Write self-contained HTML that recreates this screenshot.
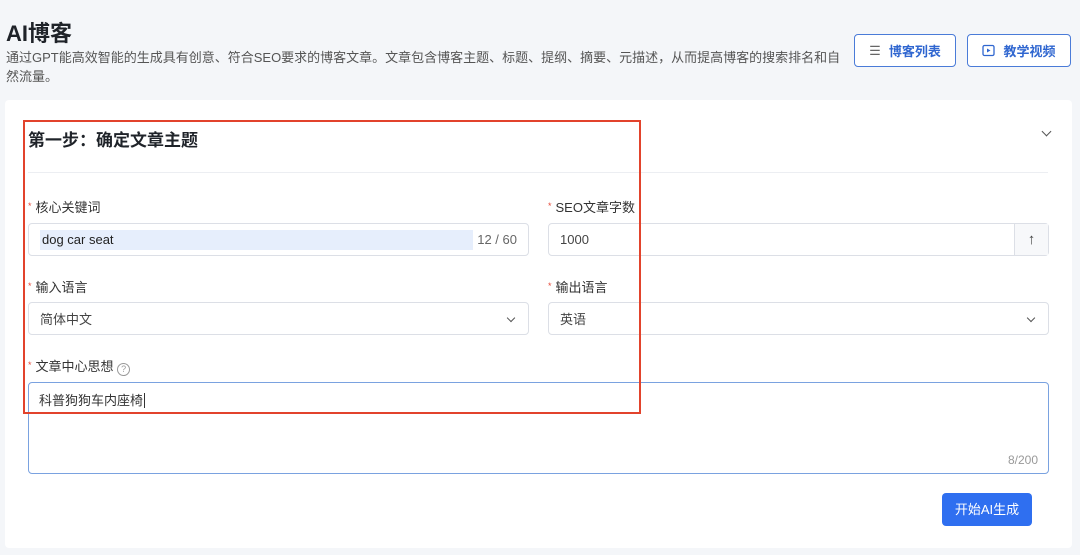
<!DOCTYPE html>
<html><head><meta charset="utf-8"><style>
*{box-sizing:border-box;margin:0;padding:0}
body{width:1080px;height:555px;background:#f4f6f9;font-family:"Liberation Sans","Noto Sans CJK SC",sans-serif;position:relative;overflow:hidden;color:#333}
.a{position:absolute}
h1{position:absolute;left:6px;top:16px;font-size:22px;font-weight:bold;color:#1f2329}
.desc{left:6px;top:48px;width:840px;font-size:13px;line-height:19px;color:#555}
.btn{position:absolute;top:34px;height:33px;border:1px solid #4a7bd8;border-radius:4px;background:#fff;color:#2f66d0;font-size:13px;font-weight:bold;display:flex;align-items:center;justify-content:center;gap:8px}
.card{left:5px;top:100px;width:1067px;height:448px;background:#fff;border-radius:4px}
.lbl{position:absolute;font-size:13px;color:#333}
.lbl:before{content:"*";color:#e64a3a;font-size:9px;margin-right:4px;position:relative;top:-3px}
.inp{position:absolute;height:33px;border:1px solid #dcdfe6;border-radius:4px;background:#fff;font-size:13px;display:flex;align-items:center;padding-left:11px}
.chev{position:absolute;right:14px;top:12px;width:6px;height:6px;border-right:1.2px solid #555;border-bottom:1.2px solid #555;transform:rotate(45deg)}
</style></head><body>
<h1>AI博客</h1>
<div class="a desc">通过GPT能高效智能的生成具有创意、符合SEO要求的博客文章。文章包含博客主题、标题、提纲、摘要、元描述，从而提高博客的搜索排名和自然流量。</div>
<div class="btn" style="left:854px;width:102px"><span style="font-weight:normal;color:#666">☰</span>博客列表</div>
<div class="btn" style="left:967px;width:104px"><svg width="13" height="13" viewBox="0 0 13 13"><rect x="1" y="1.5" width="11" height="10" rx="1.5" fill="none" stroke="#2f66d0" stroke-width="1.3"/><path d="M5 4.5l3.5 2-3.5 2z" fill="#2f66d0"/></svg>教学视频</div>
<div class="a card"></div>
<div class="a" style="left:28px;top:126px;font-size:17px;font-weight:bold;color:#1f2329">第一步：确定文章主题</div>
<div class="a" style="left:1043px;top:128px;width:7px;height:7px;border-right:1.2px solid #555;border-bottom:1.2px solid #555;transform:rotate(45deg)"></div>
<div class="a" style="left:28px;top:172px;width:1020px;height:1px;background:#eceef2"></div>

<div class="lbl" style="left:28px;top:197px">核心关键词</div>
<div class="inp" style="left:28px;top:223px;width:501px"><span style="background:#e6eefc;width:433px;height:20px;line-height:20px;padding-left:2px;color:#222">dog car seat</span><span style="position:absolute;right:11px;color:#666">12 / 60</span></div>
<div class="lbl" style="left:548px;top:197px">SEO文章字数</div>
<div class="inp" style="left:548px;top:223px;width:501px;color:#444">1000<div style="position:absolute;right:0;top:0;width:34px;height:31px;border-left:1px solid #dcdfe6;background:#f7f8fa;text-align:center;line-height:31px;font-size:15px;color:#444">↑</div></div>

<div class="lbl" style="left:28px;top:277px">输入语言</div>
<div class="inp" style="left:28px;top:302px;width:501px;color:#444">简体中文<span class="chev"></span></div>
<div class="lbl" style="left:548px;top:277px">输出语言</div>
<div class="inp" style="left:548px;top:302px;width:501px;color:#444">英语<span class="chev"></span></div>

<div class="lbl" style="left:28px;top:356px">文章中心思想 <span style="display:inline-block;width:13px;height:13px;border:1px solid #999;border-radius:50%;font-size:9px;line-height:11px;text-align:center;color:#999;vertical-align:-1px">?</span></div>
<div class="a" style="left:28px;top:382px;width:1021px;height:92px;border:1px solid #7aa2e0;border-radius:4px;background:#fff;font-size:13px;color:#333;padding:7px 10px">科普狗狗车内座椅<span style="border-left:1px solid #333;margin-left:1px"></span>
<span style="position:absolute;right:10px;bottom:6px;color:#999;font-size:12px">8/200</span></div>
<div class="a" style="left:942px;top:493px;width:90px;height:33px;background:#2f6ff0;border-radius:4px;color:#fff;font-size:13px;line-height:33px;text-align:center">开始AI生成</div>

<div class="a" style="left:23px;top:120px;width:618px;height:294px;border:2.5px solid #e2432c"></div>
</body></html>
